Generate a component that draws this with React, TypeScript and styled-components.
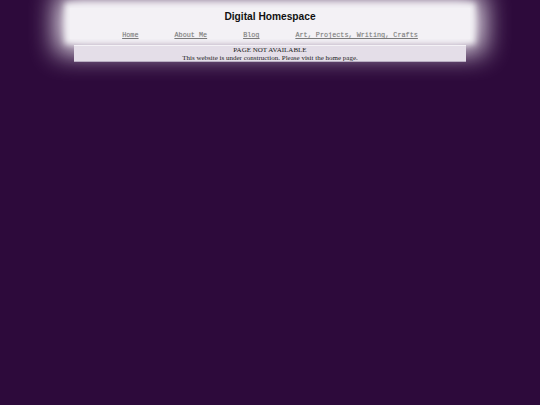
import React from "react";
import styled, { createGlobalStyle } from "styled-components";

const Global = createGlobalStyle`
  html, body { margin: 0; padding: 0; background: #2d0a3b; }
  body { min-height: 405px; }
`;

const Page = styled.div`
  display: flex;
  flex-direction: column;
  align-items: center;
  padding-top: 8px;
`;

const Header = styled.header`
  width: 400px;
  height: 31px;
  box-sizing: border-box;
  background: #f3f1f5;
  box-shadow: 0 0 6px 5px #f3f1f5, 0 0 26px 14px #f0ecf3;
  display: flex;
  flex-direction: column;
  align-items: center;
  padding-top: 2px;
`;

const Title = styled.h1`
  margin: 0;
  font-family: "Comic Sans MS", "Liberation Sans", sans-serif;
  font-weight: bold;
  font-size: 10.2px;
  line-height: 13px;
  color: #111;
`;

const Nav = styled.nav`
  display: flex;
  gap: 36px;
  margin-top: 8px;
`;

const NavLink = styled.a`
  font-family: "Liberation Mono", monospace;
  font-size: 6.8px;
  line-height: 8px;
  color: #7a7a7a;
  text-decoration: underline;
  text-shadow: 0 0 1px #ccc;
`;

const Notice = styled.section`
  width: 392px;
  margin-top: 6px;
  box-sizing: border-box;
  background: #e4dee8;
  border-top: 1px solid #f4f2f6;
  border-bottom: 1px solid #b9aec2;
  text-align: center;
  font-family: "Liberation Serif", serif;
  font-size: 7px;
  line-height: 8px;
  color: #222;
  position: relative;
  z-index: 1;
  height: 17px;
`;

export default function App() {
  return (
    <>
      <Global />
      <Page>
        <Header>
          <Title>Digital Homespace</Title>
          <Nav>
            <NavLink href="#">Home</NavLink>
            <NavLink href="#">About Me</NavLink>
            <NavLink href="#">Blog</NavLink>
            <NavLink href="#">Art, Projects, Writing, Crafts</NavLink>
          </Nav>
        </Header>
        <Notice>
          PAGE NOT AVAILABLE
          <br />
          This website is under construction. Please visit the home page.
        </Notice>
      </Page>
    </>
  );
}
